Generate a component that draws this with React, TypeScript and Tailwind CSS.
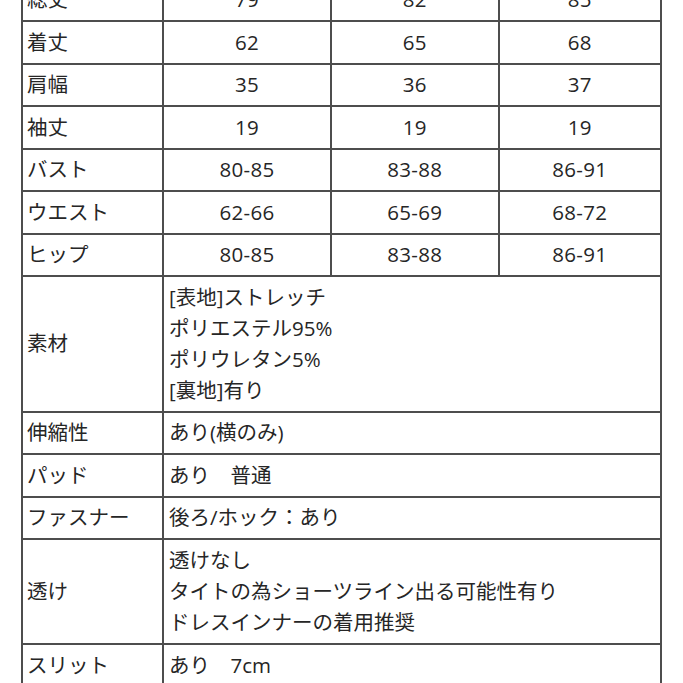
const sizes: [string, string, string, string][] = [
  ['総丈', '79', '82', '85'],
  ['着丈', '62', '65', '68'],
  ['肩幅', '35', '36', '37'],
  ['袖丈', '19', '19', '19'],
  ['バスト', '80-85', '83-88', '86-91'],
  ['ウエスト', '62-66', '65-69', '68-72'],
  ['ヒップ', '80-85', '83-88', '86-91'],
];

const details: { label: string; lines: string[]; tall?: string }[] = [
  { label: '素材', lines: ['[表地]ストレッチ', 'ポリエステル95%', 'ポリウレタン5%', '[裏地]有り'], tall: 'h-[135.5px]' },
  { label: '伸縮性', lines: ['あり(横のみ)'] },
  { label: 'パッド', lines: ['あり　普通'] },
  { label: 'ファスナー', lines: ['後ろ/ホック：あり'] },
  { label: '透け', lines: ['透けなし', 'タイトの為ショーツライン出る可能性有り', 'ドレスインナーの着用推奨'], tall: 'h-[105px]' },
  { label: 'スリット', lines: ['あり　7cm'] },
];

const cell = 'flex items-center border-r-2 border-b-2 border-[#4d4d4d]';

export default function App() {
  return (
    <div className="h-[683px] w-[683px] overflow-hidden bg-white text-[20.5px] leading-[31px] text-[#262626] [font-family:'Open_Sans','Noto_Sans_CJK_JP',sans-serif]">
      <div className="ml-[21px] mt-[-22.5px] grid w-[641px] grid-cols-[141px_168px_167.5px_162.5px] border-l-2 border-t-2 border-[#4d4d4d]">
        {sizes.map(([label, a, b, c]) => (
          <div key={label} className="contents">
            <div className={`${cell} h-[42.5px] pl-[4px]`}>{label}</div>
            <div className={`${cell} h-[42.5px] justify-center tracking-[0.3px]`}>{a}</div>
            <div className={`${cell} h-[42.5px] justify-center tracking-[0.3px]`}>{b}</div>
            <div className={`${cell} h-[42.5px] justify-center tracking-[0.3px]`}>{c}</div>
          </div>
        ))}
        {details.map((d) => (
          <div key={d.label} className="contents">
            <div className={`${cell} ${d.tall ?? 'h-[42.5px]'} pl-[4px]`}>{d.label}</div>
            <div className={`${cell} ${d.tall ?? 'h-[42.5px]'} col-span-3 pl-[5px]`}>
              <div className="flex flex-col">
                {d.lines.map((l) => (
                  <span key={l}>{l}</span>
                ))}
              </div>
            </div>
          </div>
        ))}
      </div>
    </div>
  );
}
